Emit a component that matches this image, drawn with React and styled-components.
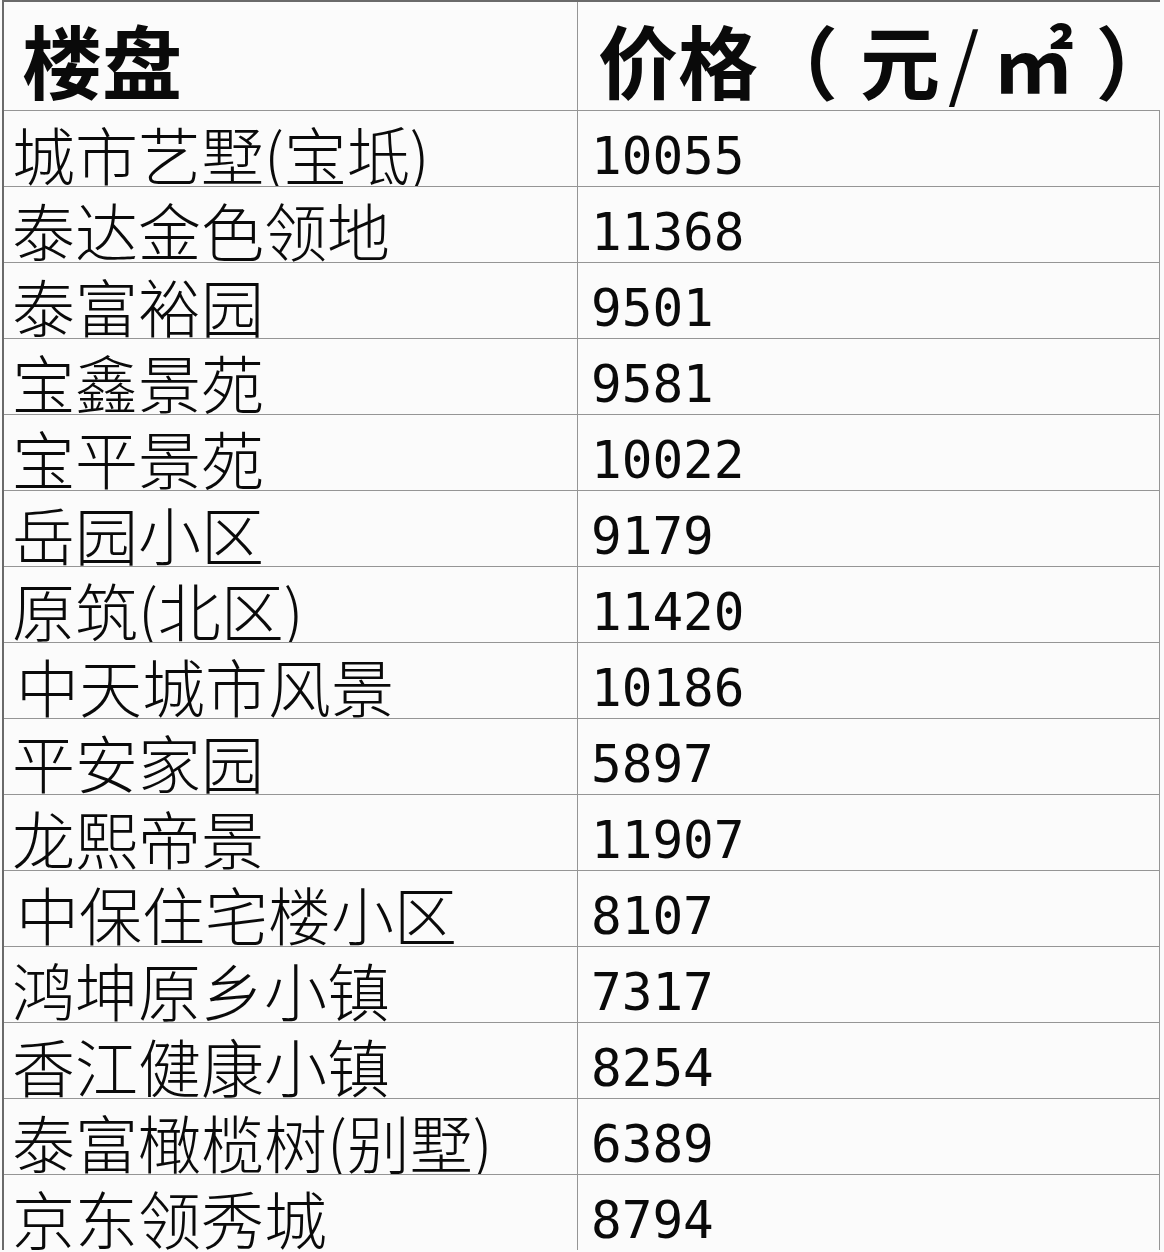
import React from "react";
import styled, { createGlobalStyle } from "styled-components";

const GlobalStyle = createGlobalStyle`
  html, body {
    margin: 0;
    padding: 0;
    background: #fbfbfb;
  }
  body {
    font-family: "Noto Sans CJK SC", "Liberation Sans", sans-serif;
    color: #111;
  }
`;

const rows = [
  { name: "城市艺墅(宝坻)", price: "10055" },
  { name: "泰达金色领地", price: "11368" },
  { name: "泰富裕园", price: "9501" },
  { name: "宝鑫景苑", price: "9581" },
  { name: "宝平景苑", price: "10022" },
  { name: "岳园小区", price: "9179" },
  { name: "原筑(北区)", price: "11420" },
  { name: "中天城市风景", price: "10186", indent: true },
  { name: "平安家园", price: "5897" },
  { name: "龙熙帝景", price: "11907" },
  { name: "中保住宅楼小区", price: "8107", indent: true },
  { name: "鸿坤原乡小镇", price: "7317" },
  { name: "香江健康小镇", price: "8254" },
  { name: "泰富橄榄树(别墅)", price: "6389" },
  { name: "京东领秀城", price: "8794" }
];

const Sheet = styled.div`
  margin-left: 2px;
  width: 1156px;
  border-top: 2px solid #6a6a6a;
  border-left: 2px solid #6a6a6a;
  background: #fbfbfb;
`;

const Row = styled.div`
  display: grid;
  grid-template-columns: 573px 1fr;
  height: ${p => (p.head ? "108px" : "75px")};
  border-bottom: 1px solid #959595;
  border-right: ${p => (p.head ? "none" : "1px solid #959595")};
  &:last-child {
    border-bottom: none;
  }
`;

const Cell = styled.div`
  display: flex;
  align-items: flex-end;
  overflow: hidden;
  white-space: nowrap;
  & + & {
    border-left: 1px solid #959595;
  }
`;

const HeadText = styled.span`
  display: flex;
  align-items: baseline;
  font-family: "Noto Sans CJK SC", sans-serif;
  font-weight: 700;
  font-size: 80px;
  line-height: 80px;
  padding-left: ${p => p.pad}px;
  padding-bottom: 12px;
  color: #0a0a0a;
`;

const HeadParen = styled.span`
  display: inline-block;
  margin: ${p => (p.close ? "0 -40px 0 22px" : "0 22px 0 0")};
`;

const Slash = styled.span`
  display: inline-block;
  margin: 0 14px 0 8px;
  font-weight: 400;
`;

const Name = styled.span`
  font-family: "Noto Sans CJK SC", sans-serif;
  font-weight: 300;
  font-size: 63px;
  line-height: 63px;
  padding-left: ${p => (p.indent ? 12 : 8)}px;
  padding-bottom: 2px;
  color: #0a0a0a;
`;

const Price = styled.span`
  font-family: "DejaVu Sans Mono", "Liberation Mono", monospace;
  font-size: 51px;
  line-height: 51px;
  padding-left: 13px;
  padding-bottom: 4px;
  color: #0a0a0a;
`;

export default function App() {
  return (
    <>
      <GlobalStyle />
      <Sheet>
        <Row head>
          <Cell>
            <HeadText pad={18}>楼盘</HeadText>
          </Cell>
          <Cell>
            <HeadText pad={20}>
              价格<HeadParen>（</HeadParen>元<Slash>/</Slash>㎡<HeadParen close>）</HeadParen>
            </HeadText>
          </Cell>
        </Row>
        {rows.map(r => (
          <Row key={r.name}>
            <Cell>
              <Name indent={r.indent}>{r.name}</Name>
            </Cell>
            <Cell>
              <Price>{r.price}</Price>
            </Cell>
          </Row>
        ))}
      </Sheet>
    </>
  );
}
